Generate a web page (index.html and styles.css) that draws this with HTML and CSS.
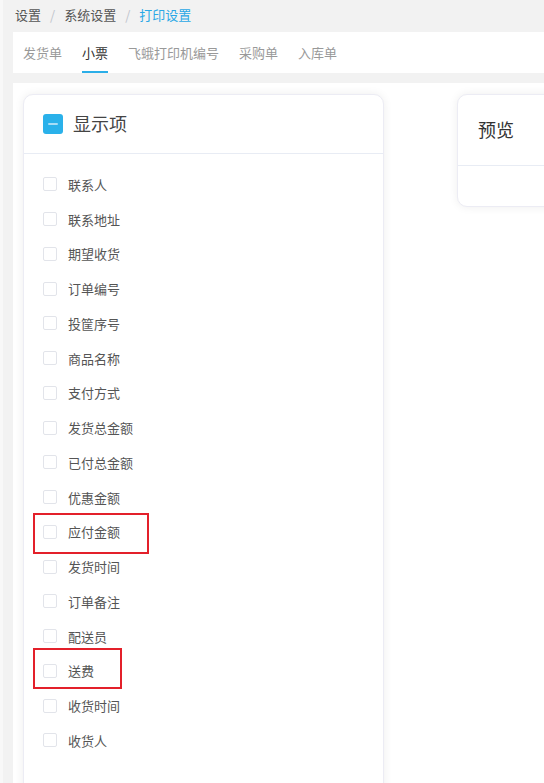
FILE: index.html
```html
<!DOCTYPE html>
<html lang="zh-CN">
<head>
<meta charset="utf-8">
<title>打印设置</title>
<link rel="stylesheet" href="styles.css">
</head>
<body>
<div class="layout">
  <div class="breadcrumb">
    <span class="crumb">设置</span><span class="sep">/</span><span class="crumb">系统设置</span><span class="sep">/</span><span class="crumb current">打印设置</span>
  </div>
  <div class="tabs">
    <span class="tab">发货单</span>
    <span class="tab active">小票</span>
    <span class="tab">飞蛾打印机编号</span>
    <span class="tab">采购单</span>
    <span class="tab">入库单</span>
  </div>
  <div class="content">
    <div class="card fields">
      <div class="card-head">
        <span class="check-all"><span class="minus"></span></span>
        <span class="head-title">显示项</span>
      </div>
      <div class="card-body">
        <label class="row"><span class="box"></span><span class="label">联系人</span></label>
        <label class="row"><span class="box"></span><span class="label">联系地址</span></label>
        <label class="row"><span class="box"></span><span class="label">期望收货</span></label>
        <label class="row"><span class="box"></span><span class="label">订单编号</span></label>
        <label class="row"><span class="box"></span><span class="label">投筐序号</span></label>
        <label class="row"><span class="box"></span><span class="label">商品名称</span></label>
        <label class="row"><span class="box"></span><span class="label">支付方式</span></label>
        <label class="row"><span class="box"></span><span class="label">发货总金额</span></label>
        <label class="row"><span class="box"></span><span class="label">已付总金额</span></label>
        <label class="row"><span class="box"></span><span class="label">优惠金额</span></label>
        <label class="row"><span class="box"></span><span class="label">应付金额</span><span class="mark mark-a"></span></label>
        <label class="row"><span class="box"></span><span class="label">发货时间</span></label>
        <label class="row"><span class="box"></span><span class="label">订单备注</span></label>
        <label class="row"><span class="box"></span><span class="label">配送员</span></label>
        <label class="row"><span class="box"></span><span class="label">送费</span><span class="mark mark-b"></span></label>
        <label class="row"><span class="box"></span><span class="label">收货时间</span></label>
        <label class="row"><span class="box"></span><span class="label">收货人</span></label>
      </div>
    </div>
    <div class="card preview">
      <div class="preview-head">预览</div>
      <div class="preview-body"></div>
    </div>
  </div>
</div>
</body>
</html>
```

FILE: styles.css
```css
html, body {
  margin: 0;
  padding: 0;
}
body {
  background: #f2f2f2;
  font-family: "Noto Sans CJK SC", "Noto Sans", sans-serif;
  width: 544px;
  height: 783px;
  overflow: hidden;
  border-left: 3px solid #f8f8f8;
  box-sizing: border-box;
}
.layout {
  padding-left: 10px;
  display: flex;
  flex-direction: column;
  height: 783px;
}
.breadcrumb {
  height: 32px;
  display: flex;
  align-items: center;
  padding-left: 2px;
  padding-bottom: 3px;
  box-sizing: border-box;
  font-size: 13px;
  color: #555;
}
.sep {
  color: #c0c4cc;
  margin: 0 9px;
}
.crumb.current {
  color: #2aa8e6;
}
.tabs {
  background: #fff;
  height: 41px;
  display: flex;
  align-items: stretch;
  gap: 20px;
  padding-left: 10px;
  box-sizing: border-box;
}
.tab {
  font-size: 13px;
  color: #999;
  display: flex;
  align-items: center;
  padding-top: 1px;
  border-bottom: 2px solid transparent;
}
.tab.active {
  color: #333;
  border-bottom-color: #2aaee8;
}
.content {
  margin-top: 10px;
  background: #fff;
  flex: 1;
  display: flex;
  align-items: flex-start;
  gap: 73px;
  padding: 11px 0 0 10px;
  overflow: hidden;
}
.card {
  background: #fff;
  border: 1px solid #ececf4;
  border-radius: 10px;
  box-shadow: 0 0 10px rgba(0, 0, 0, 0.07);
  box-sizing: border-box;
  flex-shrink: 0;
}
.fields {
  width: 361px;
  height: 720px;
}
.card-head {
  height: 57px;
  border-bottom: 1px solid #e8ecf4;
  display: flex;
  align-items: center;
  padding-left: 19px;
  padding-bottom: 1px;
  gap: 10px;
}
.check-all {
  width: 20px;
  height: 20px;
  border-radius: 3px;
  background: #2ab1ea;
  display: flex;
  align-items: center;
  justify-content: center;
}
.minus {
  width: 10px;
  height: 2px;
  background: #a8ddf6;
  border-radius: 1px;
}
.head-title {
  font-size: 18px;
  color: #444;
  line-height: 20px;
  padding-bottom: 2px;
}
.card-body {
  padding-top: 13px;
}
.row {
  position: relative;
  height: 34.75px;
  display: flex;
  align-items: center;
  padding-left: 19px;
}
.box {
  width: 14px;
  height: 14px;
  border: 1px solid #e2e4ea;
  border-radius: 2px;
  box-sizing: border-box;
  margin-right: 11px;
}
.label {
  font-size: 13px;
  color: #555;
}
.mark {
  position: absolute;
  border: 2px solid #e3202a;
  box-sizing: border-box;
}
.mark-a {
  left: 9px;
  top: -2px;
  width: 116px;
  height: 41px;
}
.mark-b {
  left: 9px;
  top: -6px;
  width: 89px;
  height: 41px;
}
.preview {
  width: 200px;
  height: 113px;
}
.preview-head {
  height: 71px;
  border-bottom: 1px solid #e8ecf4;
  display: flex;
  align-items: center;
  padding-left: 20px;
  padding-bottom: 2px;
  font-size: 18px;
  color: #333;
  box-sizing: border-box;
}
```
